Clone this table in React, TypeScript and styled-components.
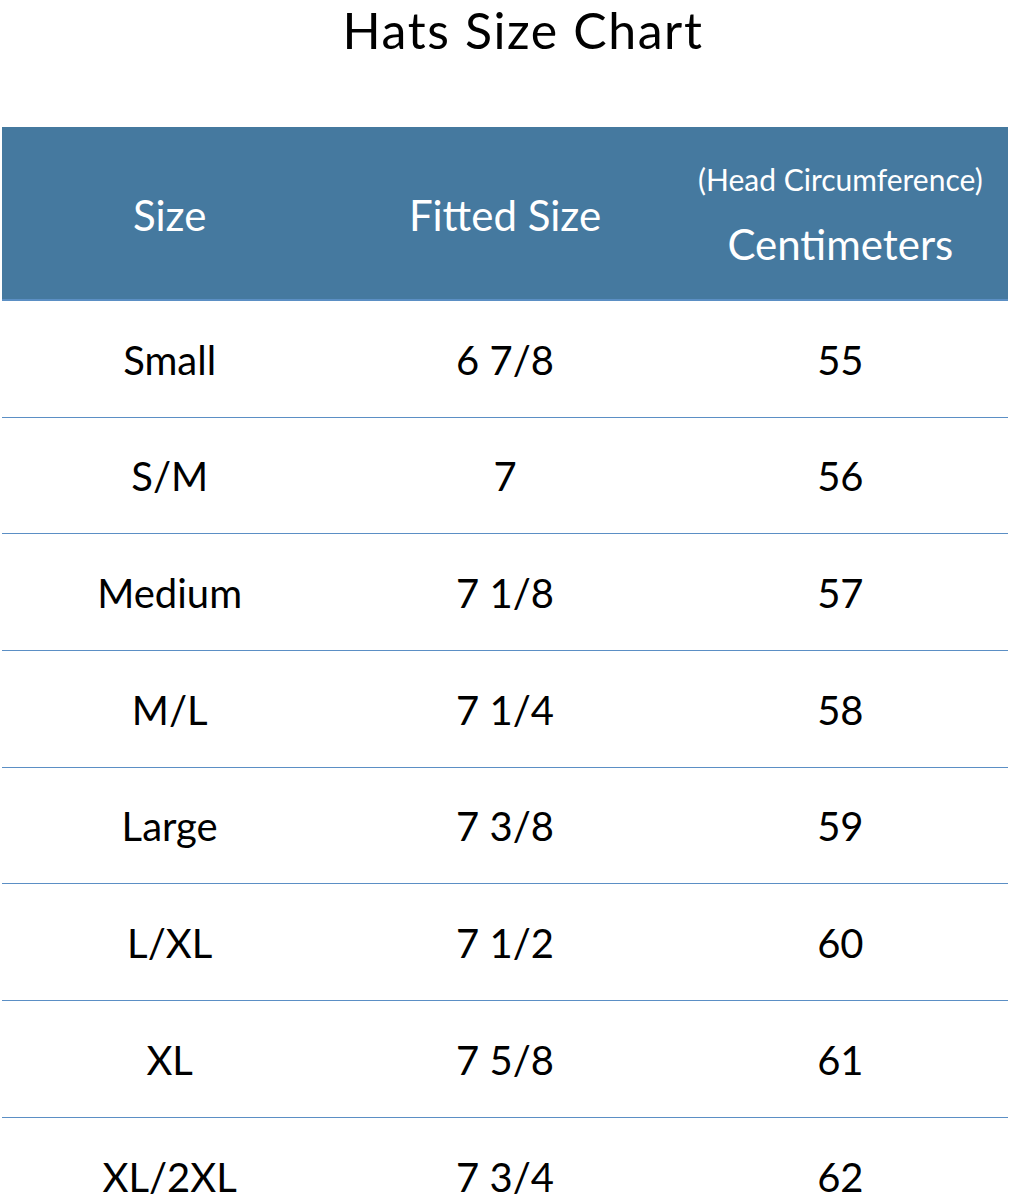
import React from 'react'
import styled, { createGlobalStyle } from 'styled-components'

const GlobalStyle = createGlobalStyle`
  body {
    margin: 0;
    background: #ffffff;
    font-family: 'Lato', 'Open Sans', sans-serif;
  }
`

const Page = styled.div`
  width: 1011px;
  padding: 0 3px 0 2px;
  box-sizing: border-box;
`

const Title = styled.h1`
  margin: 0;
  height: 127px;
  padding-left: 36px;
  font-size: 50px;
  font-weight: 400;
  line-height: 60px;
  letter-spacing: 1.6px;
  text-align: center;
  color: #000;
`

const Table = styled.div`
  display: grid;
  grid-template-columns: repeat(3, 1fr);
`

const HeadCell = styled.div`
  height: 174px;
  padding-top: 3px;
  box-sizing: border-box;
  background: #45799f;
  border-bottom: 2px solid #5b8fc4;
  color: #ffffff;
  display: flex;
  flex-direction: column;
  align-items: center;
  justify-content: center;
  font-size: 42px;
  line-height: 50px;
`

const HeadNote = styled.span`
  font-size: 30px;
  line-height: 36px;
  margin-bottom: 22px;
`

const Cell = styled.div<{ $last?: boolean }>`
  height: 116.67px;
  border-bottom: ${(p) => (p.$last ? 'none' : '1px solid #5b8fc5')};
  display: flex;
  align-items: center;
  justify-content: center;
  font-size: 40px;
  color: #000;
  padding-top: 2px;
  box-sizing: border-box;
`

const rows = [
  ['Small', '6 7/8', '55'],
  ['S/M', '7', '56'],
  ['Medium', '7 1/8', '57'],
  ['M/L', '7 1/4', '58'],
  ['Large', '7 3/8', '59'],
  ['L/XL', '7 1/2', '60'],
  ['XL', '7 5/8', '61'],
  ['XL/2XL', '7 3/4', '62'],
]

export default function App() {
  return (
    <Page>
      <GlobalStyle />
      <Title>Hats Size Chart</Title>
      <Table>
        <HeadCell>Size</HeadCell>
        <HeadCell>Fitted Size</HeadCell>
        <HeadCell>
          <HeadNote>(Head Circumference)</HeadNote>
          Centimeters
        </HeadCell>
        {rows.map((r, i) =>
          r.map((v, j) => (
            <Cell key={`${i}-${j}`} $last={i === rows.length - 1}>
              {v}
            </Cell>
          )),
        )}
      </Table>
    </Page>
  )
}
